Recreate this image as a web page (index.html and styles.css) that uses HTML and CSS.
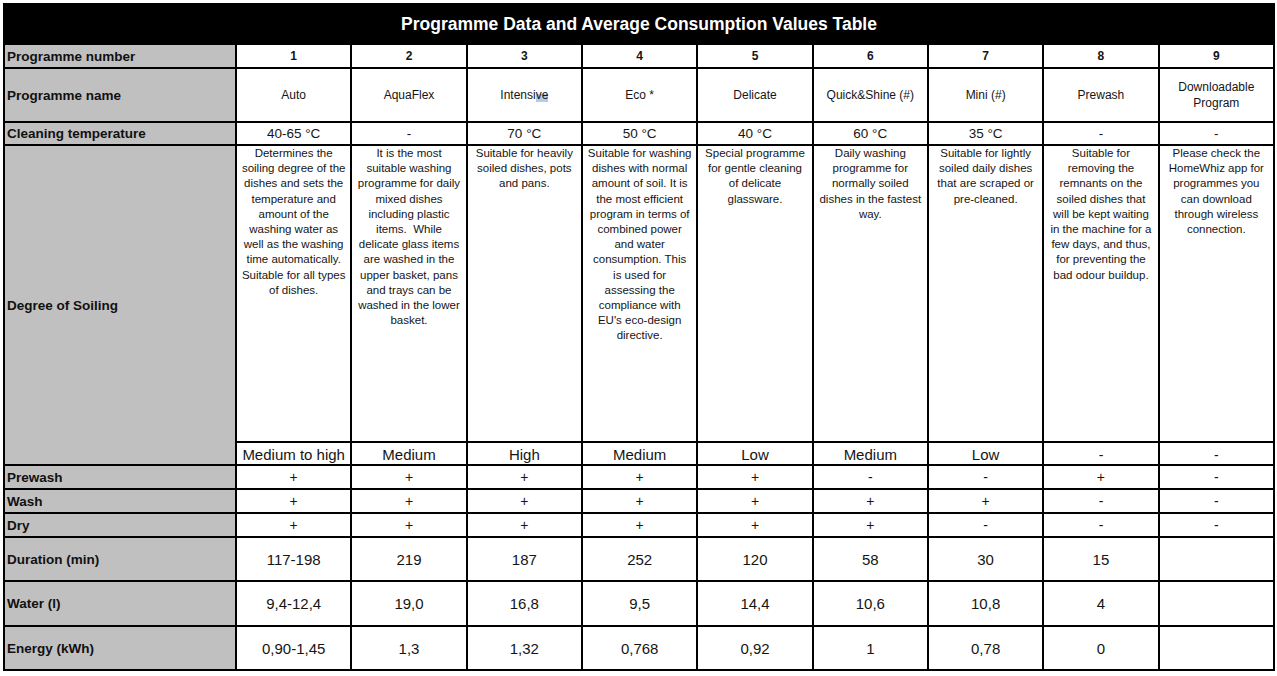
FILE: index.html
```html
<!DOCTYPE html>
<html lang="en">
<head>
<meta charset="utf-8">
<title>Programme Data and Average Consumption Values Table</title>
<link rel="stylesheet" href="styles.css">
</head>
<body>
<table class="sheet">
  <colgroup>
    <col class="col-label">
    <col><col><col><col><col><col><col><col><col>
  </colgroup>
  <tr class="r-title">
    <th class="title" colspan="10">Programme Data and Average Consumption Values Table</th>
  </tr>
  <tr class="r-num">
    <th class="label">Programme number</th>
    <td class="num">1</td><td class="num">2</td><td class="num">3</td><td class="num">4</td><td class="num">5</td><td class="num">6</td><td class="num">7</td><td class="num">8</td><td class="num">9</td>
  </tr>
  <tr class="r-54">
    <th class="label">Programme name</th>
    <td class="name">Auto</td>
    <td class="name">AquaFlex</td>
    <td class="name">Intensi<span class="hl">ve</span></td>
    <td class="name">Eco *</td>
    <td class="name">Delicate</td>
    <td class="name">Quick&amp;Shine (#)</td>
    <td class="name">Mini (#)</td>
    <td class="name">Prewash</td>
    <td class="name">Downloadable<br>Program</td>
  </tr>
  <tr class="r-23">
    <th class="label">Cleaning temperature</th>
    <td class="val">40-65 °C</td>
    <td class="val">-</td>
    <td class="val">70 °C</td>
    <td class="val">50 °C</td>
    <td class="val">40 °C</td>
    <td class="val">60 °C</td>
    <td class="val">35 °C</td>
    <td class="val">-</td>
    <td class="val">-</td>
  </tr>
  <tr class="r-desc">
    <th class="label" rowspan="2">Degree of Soiling</th>
    <td class="desc">Determines the<br>soiling degree of the<br>dishes and sets the<br>temperature and<br>amount of the<br>washing water as<br>well as the washing<br>time automatically.<br>Suitable for all types<br>of dishes.</td>
    <td class="desc">It is the most<br>suitable washing<br>programme for daily<br>mixed dishes<br>including plastic<br>items.&nbsp; While<br>delicate glass items<br>are washed in the<br>upper basket, pans<br>and trays can be<br>washed in the lower<br>basket.</td>
    <td class="desc">Suitable for heavily<br>soiled dishes, pots<br>and pans.</td>
    <td class="desc">Suitable for washing<br>dishes with normal<br>amount of soil. It is<br>the most efficient<br>program in terms of<br>combined power<br>and water<br>consumption. This<br>is used for<br>assessing the<br>compliance with<br>EU's eco-design<br>directive.</td>
    <td class="desc">Special programme<br>for gentle cleaning<br>of delicate<br>glassware.</td>
    <td class="desc">Daily washing<br>programme for<br>normally soiled<br>dishes in the fastest<br>way.</td>
    <td class="desc">Suitable for lightly<br>soiled daily dishes<br>that are scraped or<br>pre-cleaned.</td>
    <td class="desc">Suitable for<br>removing the<br>remnants on the<br>soiled dishes that<br>will be kept waiting<br>in the machine for a<br>few days, and thus,<br>for preventing the<br>bad odour buildup.</td>
    <td class="desc">Please check the<br>HomeWhiz app for<br>programmes you<br>can download<br>through wireless<br>connection.</td>
  </tr>
  <tr class="r-level">
    <td class="big">Medium to high</td>
    <td class="big">Medium</td>
    <td class="big">High</td>
    <td class="big">Medium</td>
    <td class="big">Low</td>
    <td class="big">Medium</td>
    <td class="big">Low</td>
    <td class="sym">-</td>
    <td class="sym">-</td>
  </tr>
  <tr class="r-24">
    <th class="label">Prewash</th>
    <td class="sym">+</td><td class="sym">+</td><td class="sym">+</td><td class="sym">+</td><td class="sym">+</td><td class="sym">-</td><td class="sym">-</td><td class="sym">+</td><td class="sym">-</td>
  </tr>
  <tr class="r-24">
    <th class="label">Wash</th>
    <td class="sym">+</td><td class="sym">+</td><td class="sym">+</td><td class="sym">+</td><td class="sym">+</td><td class="sym">+</td><td class="sym">+</td><td class="sym">-</td><td class="sym">-</td>
  </tr>
  <tr class="r-24">
    <th class="label">Dry</th>
    <td class="sym">+</td><td class="sym">+</td><td class="sym">+</td><td class="sym">+</td><td class="sym">+</td><td class="sym">+</td><td class="sym">-</td><td class="sym">-</td><td class="sym">-</td>
  </tr>
  <tr class="r-44">
    <th class="label">Duration (min)</th>
    <td class="big">117-198</td><td class="big">219</td><td class="big">187</td><td class="big">252</td><td class="big">120</td><td class="big">58</td><td class="big">30</td><td class="big">15</td><td class="big"></td>
  </tr>
  <tr class="r-45">
    <th class="label">Water (l)</th>
    <td class="big">9,4-12,4</td><td class="big">19,0</td><td class="big">16,8</td><td class="big">9,5</td><td class="big">14,4</td><td class="big">10,6</td><td class="big">10,8</td><td class="big">4</td><td class="big"></td>
  </tr>
  <tr class="r-44">
    <th class="label">Energy (kWh)</th>
    <td class="big">0,90-1,45</td><td class="big">1,3</td><td class="big">1,32</td><td class="big">0,768</td><td class="big">0,92</td><td class="big">1</td><td class="big">0,78</td><td class="big">0</td><td class="big"></td>
  </tr>
</table>
</body>
</html>
```

FILE: styles.css
```css
html, body {
  margin: 0;
  padding: 0;
  background: #ffffff;
}

body {
  font-family: "Liberation Sans", Arial, "DejaVu Sans", sans-serif;
  color: #151515;
}

.sheet {
  border-collapse: collapse;
  table-layout: fixed;
  width: 1272px;
  margin: 3px 0 0 3px;
}

.col-label {
  width: 232px;
}

.sheet th,
.sheet td {
  border: 2px solid #000;
  padding: 0 2px;
  text-align: center;
  vertical-align: middle;
  overflow: hidden;
  white-space: nowrap;
}

.title {
  background: #000;
  color: #fff;
  font-size: 17.5px;
  font-weight: bold;
  height: 38px;
  padding-top: 0;
}

.label {
  background: #c0c0c0;
  text-align: left !important;
  font-size: 13.5px;
  font-weight: bold;
  padding-left: 2px !important;
  color: #111;
}

.r-num > * { height: 22px; }
.r-23 > * { height: 21px; }
.r-24 > * { height: 22px; }
.r-44 > * { height: 42px; }
.r-45 > * { height: 43px; }
.r-54 > * { height: 52px; }
.r-desc > td { height: 295px; }
.r-level > td { height: 19px; padding-top: 2px; }

.num {
  font-size: 12px;
  font-weight: bold;
}

.name {
  font-size: 12px;
  line-height: 16px;
}

.hl {
  background: linear-gradient(to bottom, transparent 45%, #b3cde6 45%);
}

.val {
  font-size: 13.5px;
}

.desc {
  vertical-align: top !important;
  font-size: 11.5px;
  line-height: 15.2px;
  padding-top: 0 !important;
}

.big {
  font-size: 15px;
}

.sym {
  font-size: 14px;
}
```
